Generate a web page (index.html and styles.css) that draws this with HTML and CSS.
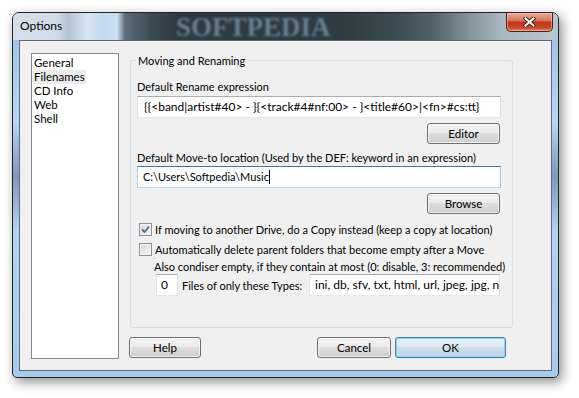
FILE: index.html
```html
<!DOCTYPE html>
<html lang="en">
  <head>
    <meta charset="UTF-8" />
    <title>Options</title>
    <link rel="stylesheet" href="styles.css">
  </head>
  <body>
    <div class="window">
      <div class="titlebar">
        <span class="watermark">SOFTPEDIA</span>
        <span class="title">Options</span>
        <button class="close" type="button" aria-label="Close">
          <svg width="13" height="10" viewBox="0 0 13 10">
            <path d="M2.5 1.5 L10.5 8.5 M10.5 1.5 L2.5 8.5" stroke="#3b1e18" stroke-width="3.8" stroke-linecap="square" fill="none" />
            <path d="M2.5 1.5 L10.5 8.5 M10.5 1.5 L2.5 8.5" stroke="#fff" stroke-width="2" stroke-linecap="square" fill="none" />
          </svg>
        </button>
      </div>

      <div class="client">
        <!-- Page list -->
        <ul class="listbox">
          <li>General</li>
          <li><span class="selected">Filenames</span></li>
          <li>CD Info</li>
          <li>Web</li>
          <li>Shell</li>
        </ul>

        <div class="main">
          <fieldset class="group">
            <legend>Moving and Renaming</legend>

            <div class="label first">Default Rename expression</div>
            <div class="field">{{&lt;band|artist#40&gt; - }{&lt;track#4#nf:00&gt; - }&lt;title#60&gt;|&lt;fn&gt;#cs:tt}</div>
            <div class="btn-line"><button class="btn" type="button">Editor</button></div>

            <div class="label">Default Move-to location (Used by the DEF: keyword in an expression)</div>
            <div class="field focused">C:\Users\Softpedia\Music<span class="caret"></span></div>
            <div class="btn-line"><button class="btn" type="button">Browse</button></div>

            <div class="check-row first-check">
              <span class="check checked">
                <svg width="11" height="11" viewBox="0 0 11 11">
                  <path d="M2 5.5 L4.5 8 L9 2.5" stroke="#4d6398" stroke-width="1.8" fill="none" />
                </svg>
              </span>
              <span>If moving to another Drive, do a Copy instead (keep a copy at location)</span>
            </div>
            <div class="check-row">
              <span class="check"></span>
              <span>Automatically delete parent folders that become empty after a Move</span>
            </div>
            <div class="note">Also condiser empty, if they contain at most (0: disable, 3: recommended)</div>
            <div class="types-row">
              <div class="field small">0</div>
              <span class="types-label">Files of only these Types:</span>
              <div class="field types">ini, db, sfv, txt, html, url, jpeg, jpg, nfo, m3u</div>
            </div>
          </fieldset>

          <div class="actions">
            <button class="btn help" type="button">Help</button>
            <button class="btn cancel" type="button">Cancel</button>
            <button class="btn ok" type="button">OK</button>
          </div>
        </div>
      </div>
    </div>
  </body>
</html>
```

FILE: styles.css
```css
body {
  margin: 0;
  width: 579px;
  height: 398px;
  overflow: hidden;
  background-color: #fff;
  font-family: Lato, "Open Sans", sans-serif;
  font-size: 11px;
  color: #000;
}

.window {
  box-sizing: border-box;
  width: 547px;
  height: 366px;
  margin: 12px 0 0 12px;
  border: 1px solid #1e252c;
  border-radius: 7px 7px 5px 5px;
  background: linear-gradient(#9fbfdf, #b9d5f0 30%, #7f98b5 45%, #b5d2ef 60%, #a9c9ea);
  box-shadow: 3px 4px 12px rgba(0, 0, 0, 0.45);
  display: flex;
  flex-direction: column;
}

.titlebar {
  position: relative;
  height: 27px;
  display: flex;
  align-items: flex-start;
  justify-content: space-between;
  border-radius: 6px 6px 0 0;
  background: linear-gradient(90deg, #d3dfe9 0px, #cfdbe6 45px, #b3c3d1 55px, #d6e5f2 75px, #c2d9ef 90px, #cde2f4 104px, #5d6d79 112px, #3a4852 140px, #2d3a42 165px, #2f3c44 330px, #3a4850 380px, #52626b 420px, #8997a0 460px, #aab8c1 490px, #b9c6cf 545px);
}

.watermark {
  position: absolute;
  left: 163px;
  top: 1px;
  line-height: 26px;
  font-family: "Liberation Serif", serif;
  font-weight: bold;
  font-size: 27px;
  color: #687f8f;
  filter: blur(1px);
}

.title {
  position: relative;
  padding: 5px 0 0 7px;
  line-height: 16px;
  font-size: 12px;
  color: #000;
}

.close {
  position: relative;
  width: 47px;
  height: 19px;
  margin-right: 5px;
  padding: 0;
  border: 1px solid #4f2218;
  border-top: none;
  border-radius: 0 0 5px 5px;
  background: linear-gradient(#eaa897, #d97a63 40%, #c2351c 52%, #c9472c 80%, #de7f62);
  box-shadow: inset 0 0 0 1px rgba(255, 220, 210, 0.45);
  display: flex;
  align-items: center;
  justify-content: center;
}

.client {
  flex: 1;
  margin: 0 6px 6px;
  border: 1px solid #5b6b7c;
  background-color: #f0f0f0;
  display: flex;
  align-items: flex-start;
  padding: 12px 0 0 11px;
}

.listbox {
  box-sizing: border-box;
  width: 88px;
  height: 306px;
  margin: 0;
  padding: 2px 2px;
  list-style: none;
  border: 1px solid #828790;
  background-color: #fff;
  font-size: 11.5px;
}
.listbox li {
  line-height: 14px;
  height: 14px;
}
.listbox .selected {
  display: inline-block;
  background-color: #ececec;
  padding: 0 1px;
  margin-left: -1px;
}

.main {
  width: 383px;
  margin-left: 11px;
  display: flex;
  flex-direction: column;
}

.group {
  box-sizing: border-box;
  width: 383px;
  min-width: 0;
  margin: 0;
  padding: 0 11px 31px 6px;
  border: 1px solid #d5dfe5;
  border-radius: 3px;
}
.group legend {
  padding: 0 2px;
  margin-left: -1px;
  line-height: 15px;
}

.label {
  line-height: 15px;
  margin-top: 6px;
  white-space: nowrap;
}
.label.first {
  margin-top: 11px;
}

.field {
  box-sizing: border-box;
  height: 22px;
  margin-top: 2px;
  padding: 0 6px;
  line-height: 20px;
  font-size: 12px;
  white-space: nowrap;
  overflow: hidden;
  background-color: #fff;
  border: 1px solid;
  border-color: #abadb3 #dbdfe6 #e3e9ef #e2e3ea;
}
.field.focused {
  margin-top: 1px;
  padding-left: 5px;
  font-size: 11px;
  border-color: #3d7bad #a4c9e3 #b7d9ed #b5cfe7;
}
.caret {
  display: inline-block;
  width: 1px;
  height: 14px;
  vertical-align: -3px;
  background-color: #000;
}

.btn-line {
  display: flex;
  justify-content: flex-end;
  margin-top: 5px;
  padding-right: 1px;
}

.btn {
  box-sizing: border-box;
  height: 21px;
  width: 73px;
  padding: 0;
  font: inherit;
  font-size: 11.5px;
  color: #000;
  border: 1px solid #707070;
  border-radius: 3px;
  background: linear-gradient(#f2f2f2, #ebebeb 45%, #dddddd 50%, #cfcfcf);
  box-shadow: inset 0 0 0 1px rgba(255, 255, 255, 0.7);
}

.check-row {
  display: flex;
  align-items: center;
  gap: 3px;
  margin: 5px 0 0 2px;
  line-height: 15px;
  white-space: nowrap;
}
.check-row.first-check {
  margin-top: 8px;
}
.check {
  box-sizing: border-box;
  width: 13px;
  height: 13px;
  flex: none;
  border: 1px solid #8e8f8f;
  background: linear-gradient(135deg, #d8d8d8, #f7f7f7);
  box-shadow: inset 0 0 0 1px #f4f4f4;
  display: flex;
  align-items: center;
  justify-content: center;
}

.note {
  margin: 2px 0 0 17px;
  line-height: 15px;
  white-space: nowrap;
}

.types-row {
  display: flex;
  align-items: center;
  margin: 0 1px 0 19px;
}
.field.small {
  width: 22px;
  margin-top: 0;
  padding: 0 4px;
}
.types-label {
  margin-left: 4px;
  white-space: nowrap;
}
.field.types {
  width: 191px;
  margin: 0 0 0 auto;
  padding: 0 5px;
}

.actions {
  display: flex;
  margin: 9px 7px 0 -1px;
}
.btn.help {
  width: 72px;
}
.btn.cancel {
  width: 74px;
  margin-left: auto;
}
.btn.ok {
  width: 111px;
  margin-left: 4px;
  border-color: #3c7fb1;
  background: linear-gradient(#e8f1f8, #dde9f2 45%, #cddde9 50%, #c4d7e5);
  box-shadow: inset 0 0 0 1px #8fd3f5;
}
```
